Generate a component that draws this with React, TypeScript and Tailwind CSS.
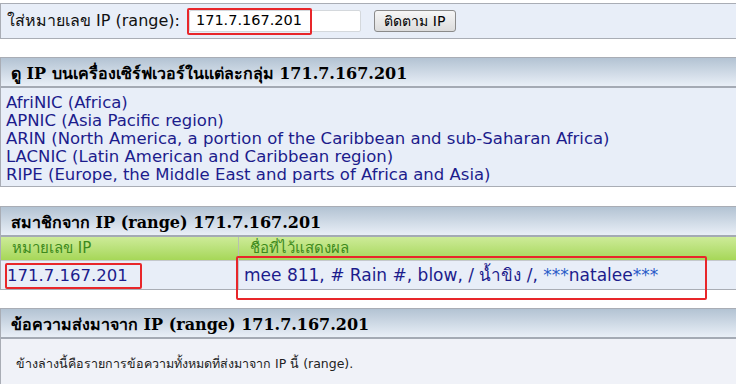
import React from "react";

const sans = { fontFamily: '"DejaVu Sans", Tahoma, Verdana, sans-serif' };
const serif = { fontFamily: '"DejaVu Serif", "Liberation Serif", serif' };

function Header({ children }: { children: React.ReactNode }) {
  return (
    <div
      className="h-[30px] flex items-center pl-[10px] pt-[3px] border-b-2 border-[#a4aab4] bg-gradient-to-b from-[#b3c3d3] to-[#e9eff7] text-[16px] font-bold text-black whitespace-nowrap"
      style={serif}
    >
      {children}
    </div>
  );
}

export default function App() {
  const ip = "171.7.167.201";
  return (
    <div className="relative w-[736px] h-[384px] overflow-hidden bg-white pt-[3px]" style={sans}>
      {/* Panel 1 */}
      <div className="h-[36px] border-y border-l border-[#a9adb5] bg-[#e8eef8] flex items-center pl-[6px] text-[16px] text-[#111]">
        <span>ใส่หมายเลข IP (range):</span>
        <div className="ml-[9px] w-[172px] h-[22px] bg-white border border-[#d4d8dc] rounded-[2px] flex items-center pl-[6px] text-[14.5px] text-black">
          {ip}
        </div>
        <button className="ml-[13px] h-[22px] w-[82px] rounded-[3px] border border-[#8a8a8a] bg-gradient-to-b from-[#f6f6f6] to-[#dcdcdc] text-[14px] text-black flex items-center justify-center">
          ติดตาม IP
        </button>
      </div>

      {/* Panel 2 */}
      <div className="mt-[18px] border-y border-l border-[#a9adb5] bg-[#e8eef8]">
        <Header>ดู IP บนเครื่องเซิร์ฟเวอร์ในแต่ละกลุ่ม {ip}</Header>
        <div className="pl-[5px] pt-[6px] pb-[2px] text-[16.5px] leading-[18px] text-[#1c1c8c]">
          <div>AfriNIC (Africa)</div>
          <div>APNIC (Asia Pacific region)</div>
          <div>ARIN (North America, a portion of the Caribbean and sub-Saharan Africa)</div>
          <div>LACNIC (Latin American and Caribbean region)</div>
          <div>RIPE (Europe, the Middle East and parts of Africa and Asia)</div>
        </div>
      </div>

      {/* Panel 3 */}
      <div className="mt-[19px] border-y border-l border-[#a9adb5] bg-[#e8eef8]">
        <Header>สมาชิกจาก IP (range) {ip}</Header>
        <div className="grid grid-cols-[238px_1fr] h-[24px] bg-gradient-to-b from-[#cdeb98] to-[#a6d757] border-b border-[#c4c8cc] text-[15px] text-[#3d8a1c]">
          <div className="border-r border-[#b8c0b0] flex items-center pl-[11px]">หมายเลข IP</div>
          <div className="flex items-center pl-[11px]">ชื่อที่ไว้แสดงผล</div>
        </div>
        <div className="grid grid-cols-[238px_1fr] h-[28px] text-[16.5px] text-[#1c1c8c]">
          <div className="border-r border-[#c4c8cc] flex items-center pl-[6px] pt-[2px]">{ip}</div>
          <div className="flex items-center pl-[5px] pt-[2px] whitespace-nowrap text-[17px]">
            mee 811, # Rain #, blow, / น้ำขิง /,&nbsp;<span className="text-[#2a5cc8]">***</span>natalee<span className="text-[#2a5cc8]">***</span>
          </div>
        </div>
      </div>

      {/* Panel 4 */}
      <div className="mt-[18px] border-t border-l border-[#a9adb5] bg-[#f0f2f8] h-[80px]">
        <Header>ข้อความส่งมาจาก IP (range) {ip}</Header>
        <div className="pl-[15px] pt-[16px] text-[12.5px] text-[#222]">
          ข้างล่างนี้คือรายการข้อความทั้งหมดที่ส่งมาจาก IP นี้ (range).
        </div>
      </div>

      {/* Annotation boxes */}
      <div className="absolute left-[187px] top-[8px] w-[125px] h-[27px] border-2 border-[#e8262a] rounded-[2px]" />
      <div className="absolute left-[5px] top-[263px] w-[137px] h-[26px] border-2 border-[#e8262a] rounded-[2px]" />
      <div className="absolute left-[236px] top-[256px] w-[471px] h-[44px] border-2 border-[#e8262a] rounded-[2px]" />
    </div>
  );
}
